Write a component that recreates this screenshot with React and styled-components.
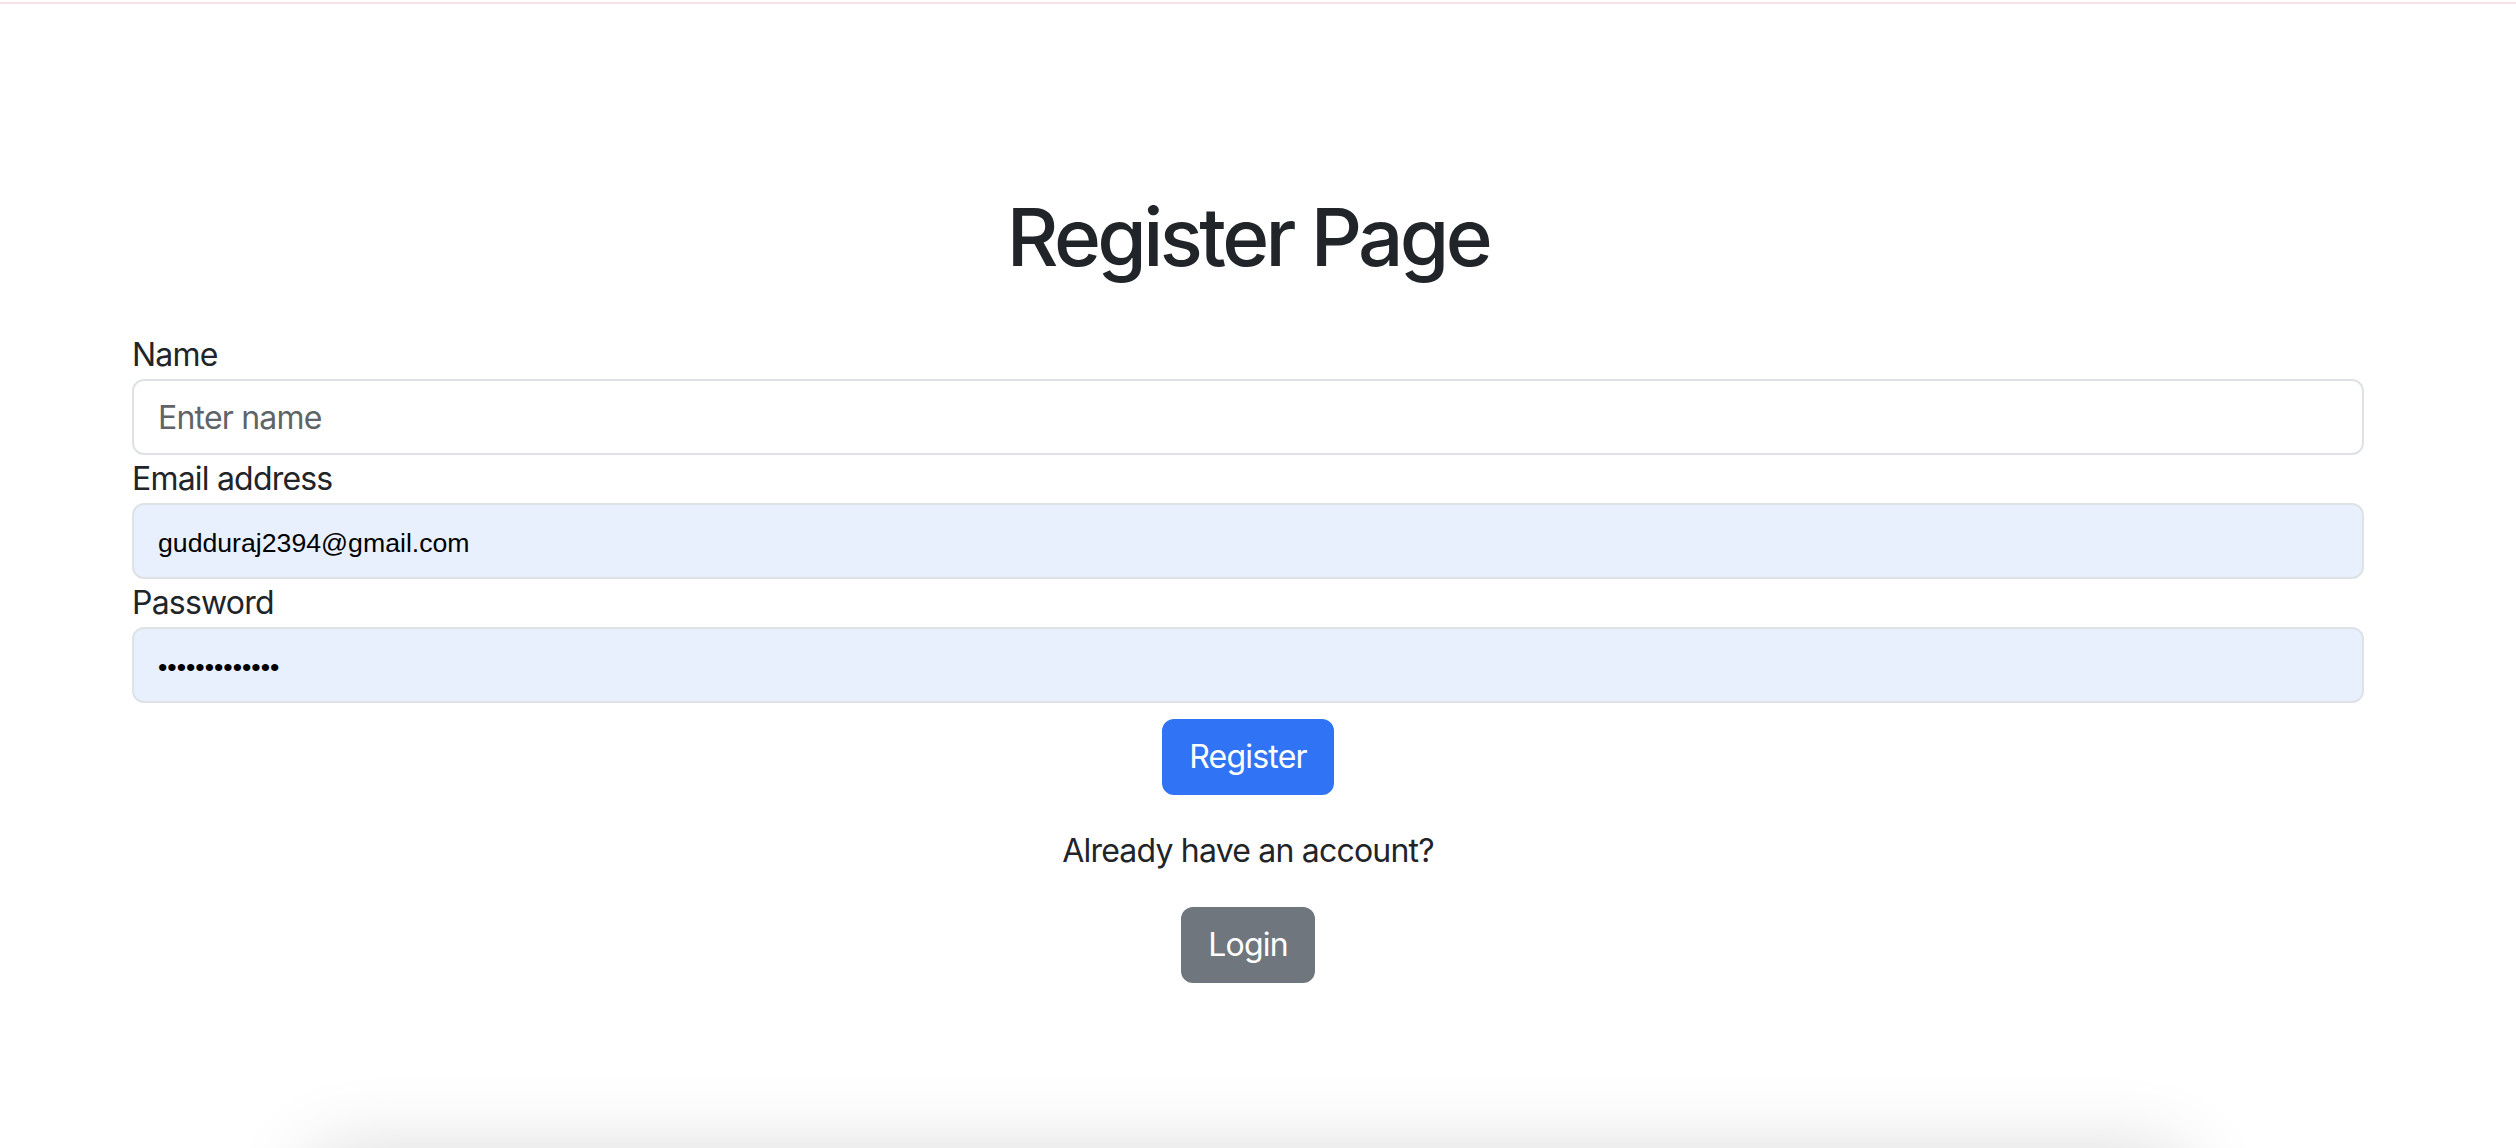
import React from 'react';
import styled, { createGlobalStyle } from 'styled-components';

const GlobalStyle = createGlobalStyle`
  html, body {
    margin: 0;
    padding: 0;
    background: #fff;
  }
  body {
    font-family: Inter, "Noto Sans", sans-serif;
    color: #212529;
  }
  * {
    box-sizing: border-box;
  }
`;

const Page = styled.div`
  width: 100%;
  height: 100vh;
  overflow: hidden;
  padding-top: 2px;
  display: flex;
  flex-direction: column;
`;

const TopRule = styled.div`
  height: 2px;
  background: #f9e1e5;
  flex-shrink: 0;
`;

const Viewport = styled.div`
  width: 2496px;
  display: flex;
  flex-direction: column;
`;

const Container = styled.div`
  width: 100%;
  max-width: 2280px;
  margin: 0 auto;
  padding: 0 24px;
`;

const Title = styled.h1`
  margin: 185px 0 46px;
  text-align: center;
  font-size: 80px;
  line-height: 96px;
  font-weight: 500;
  letter-spacing: -3.6px;
  color: #212529;
`;

const Form = styled.form`
  display: flex;
  flex-direction: column;
`;

const Label = styled.label`
  display: block;
  font-size: 32px;
  line-height: 48px;
  letter-spacing: -0.8px;
  color: #212529;
`;

const Input = styled.input`
  display: block;
  width: 100%;
  height: 76px;
  padding: ${props => (props.filled ? '5px 24px 0' : '0 24px')};
  border: 2px solid #dee2e6;
  border-radius: 12px;
  outline: none;
  background: ${props => (props.filled ? '#e8f0fe' : '#fff')};
  color: #000;
  font-family: ${props => (props.filled ? '"Liberation Sans", Arial, sans-serif' : 'Inter, sans-serif')};
  font-size: ${props => (props.filled ? '26.67px' : '32px')};
  letter-spacing: ${props => (props.filled ? '0' : '-0.8px')};

  &::placeholder {
    color: #5f6468;
  }
`;

const Actions = styled.div`
  display: flex;
  flex-direction: column;
  align-items: center;
`;

const Button = styled.button`
  margin-top: ${props => props.top}px;
  padding: 12px 25px;
  border: 2px solid ${props => props.color};
  border-radius: 12px;
  background: ${props => props.color};
  color: #fff;
  font-family: Inter, sans-serif;
  font-size: 32px;
  line-height: 48px;
  font-weight: 400;
  letter-spacing: -0.8px;
  cursor: pointer;
`;

const Note = styled.p`
  margin: 32px 0;
  font-size: 32px;
  line-height: 48px;
  letter-spacing: -0.8px;
  color: #212529;
`;

const FloatingCard = styled.div`
  width: 1876px;
  height: 200px;
  margin: 170px auto 0;
  flex-shrink: 0;
  background: #fff;
  border-radius: 24px;
  box-shadow: 0 0 80px rgba(0, 0, 0, 0.16);
`;

const App = () => (
  <>
    <GlobalStyle />
    <Page>
      <TopRule />
      <Viewport>
        <Container>
          <Title>Register Page</Title>
          <Form onSubmit={e => e.preventDefault()}>
            <Label htmlFor="name">Name</Label>
            <Input id="name" type="text" placeholder="Enter name" />
            <Label htmlFor="email">Email address</Label>
            <Input id="email" type="email" filled defaultValue="gudduraj2394@gmail.com" />
            <Label htmlFor="password">Password</Label>
            <Input id="password" type="password" filled defaultValue="gudduraj12345" />
            <Actions>
              <Button type="submit" color="#3074f5" top={16}>Register</Button>
              <Note>Already have an account?</Note>
              <Button type="button" color="#70767e" top={0}>Login</Button>
            </Actions>
          </Form>
        </Container>
        <FloatingCard />
      </Viewport>
    </Page>
  </>
);

export default App;
